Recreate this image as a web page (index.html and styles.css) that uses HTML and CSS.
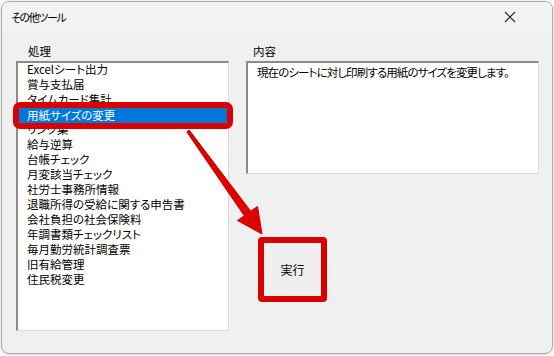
FILE: index.html
```html
<!DOCTYPE html>
<html lang="ja">
<head>
    <meta charset="UTF-8">
    <title>その他ツール</title>
    <link rel="stylesheet" href="styles.css">
</head>
<body>
    <div class="window">
        <div class="titlebar">
            <span class="title">その他ツール</span>
            <svg class="close" width="12" height="12" viewBox="0 0 12 12">
                <path d="M1 1 L11 11 M11 1 L1 11" stroke="#222" stroke-width="1.1" fill="none"/>
            </svg>
        </div>
        <div class="content">
            <div class="col">
                <div class="label">処理</div>
                <ul class="listbox">
                    <li>Excelシート出力</li>
                    <li>賞与支払届</li>
                    <li>タイムカード集計</li>
                    <li class="selected">用紙サイズの変更</li>
                    <li>リンク集</li>
                    <li>給与逆算</li>
                    <li>台帳チェック</li>
                    <li>月変該当チェック</li>
                    <li>社労士事務所情報</li>
                    <li>退職所得の受給に関する申告書</li>
                    <li>会社負担の社会保険料</li>
                    <li>年調書類チェックリスト</li>
                    <li>毎月勤労統計調査票</li>
                    <li>旧有給管理</li>
                    <li>住民税変更</li>
                </ul>
            </div>
            <div class="col">
                <div class="label">内容</div>
                <div class="textbox">現在のシートに対し印刷する用紙のサイズを変更します。</div>
                <button type="button" class="btn">実行</button>
            </div>
        </div>
    </div>

    <!-- annotation arrow -->
    <svg class="arrow" width="554" height="356" viewBox="0 0 554 356">
        <polygon points="189.2,130.1 250.7,211.2 257.5,206.5 262,234 237.5,220.5 244.3,215.8 186.8,131.9"
                 fill="#e00000" stroke="#c40000" stroke-width="1" stroke-linejoin="round"/>
    </svg>
</body>
</html>
```

FILE: styles.css
```css
* { margin: 0; padding: 0; box-sizing: border-box; }
body {
    font-family: "Noto Sans CJK JP", "Noto Sans", sans-serif;
    font-feature-settings: "palt";
    font-size: 11.5px; color: #000;
    background: #fff;
    position: relative;
    width: 554px; height: 356px; overflow: hidden;
}
.window {
    margin: 1px 0 0 1px;
    width: 552px; height: 353px;
    background: #f0f0f0;
    border: 1px solid #a9a9a9; border-radius: 8px;
    box-shadow: 0 1px 4px rgba(0, 0, 0, 0.15);
    overflow: hidden;
}
.titlebar {
    height: 30px; background: #f3f3f3;
    display: flex; align-items: center; justify-content: space-between;
    padding: 0 36px 0 9px;
}
.title { font-size: 11px; letter-spacing: -1.4px; }
.content {
    display: flex; gap: 17px;
    padding: 12px 0 0 14px;
}
.col { display: flex; flex-direction: column; }
.label { line-height: 15px; height: 15px; margin: 0 0 2px 12px; }
.col + .col .label { margin-left: 7px; }
.listbox {
    list-style: none;
    width: 213px; height: 270px;
    background: #fff;
    border-top: 2px solid #8a8a8a; border-left: 2px solid #8a8a8a;
    border-right: 1px solid #dadada; border-bottom: 1px solid #dadada;
}
.listbox li {
    line-height: 13px; height: 15px;
    padding: 0 0 2px 8px; margin: 0 1px;
    white-space: nowrap;
}
.listbox li.selected {
    background: #0078d7; color: #fff;
    line-height: 14px;
    outline: 6px solid #d80000; border-radius: 1px;
}
.textbox {
    width: 293px; height: 113px;
    background: #fff;
    border-top: 2px solid #8a8a8a; border-left: 2px solid #8a8a8a;
    border-right: 1px solid #dadada; border-bottom: 1px solid #dadada;
    padding: 2px 9px;
    line-height: 15px;
    letter-spacing: -0.9px;
    white-space: nowrap;
}
.btn {
    margin: 63px 0 0 12px;
    width: 69px; height: 65px;
    font: inherit; font-size: 12px;
    background: #efefef;
    border: 6px solid #d80000; border-radius: 4px;
}
.arrow { position: absolute; left: 0; top: 0; }
```
